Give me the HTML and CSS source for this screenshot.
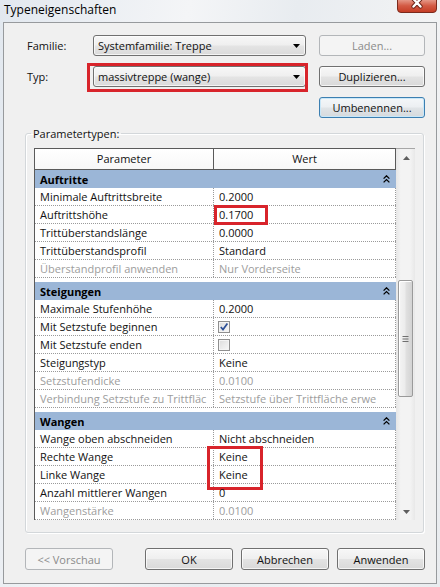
FILE: index.html
```html
<!DOCTYPE html>
<html lang="de">
<head>
<meta charset="utf-8">
<title>Typeneigenschaften</title>
<link rel="stylesheet" href="styles.css">
</head>
<body>
<div class="window">
  <div class="titlebar">
    <span class="title">Typeneigenschaften</span>
    <svg class="close" width="40" height="13" viewBox="0 0 40 13">
      <defs>
        <linearGradient id="cg" x1="0" y1="0" x2="0" y2="1">
          <stop offset="0" stop-color="#e8a192"/>
          <stop offset="0.5" stop-color="#d35a44"/>
          <stop offset="1" stop-color="#c43b24"/>
        </linearGradient>
      </defs>
      <path d="M0.5 -1 V9 a3.5 3.5 0 0 0 3.5 3.5 H36 a3.5 3.5 0 0 0 3.5 -3.5 V-1 Z" fill="url(#cg)" stroke="#7b2a1d"/>
      <path d="M16.5 -1 L23.5 6.5 M23.5 -1 L16.5 6.5" stroke="#6b2216" stroke-width="4.2" stroke-linecap="round"/>
      <path d="M16.5 -1 L23.5 6.5 M23.5 -1 L16.5 6.5" stroke="#ffffff" stroke-width="2.4" stroke-linecap="round"/>
    </svg>
  </div>

  <div class="panel">
    <div class="form">
      <span class="lbl">Familie:</span>
      <div class="combo">
        <span class="combo-text">Systemfamilie: Treppe</span>
        <svg class="caret" width="7" height="4" viewBox="0 0 7 4"><path d="M0 0H7L3.5 4Z" fill="#000"/></svg>
      </div>
      <button class="btn disabled" type="button">Laden...</button>

      <span class="lbl">Typ:</span>
      <div class="combo">
        <span class="combo-text">massivtreppe (wange)</span>
        <svg class="caret" width="7" height="4" viewBox="0 0 7 4"><path d="M0 0H7L3.5 4Z" fill="#000"/></svg>
        <span class="mark mark-typ"></span>
      </div>
      <button class="btn" type="button">Duplizieren...</button>

      <button class="btn focus col3" type="button">Umbenennen...</button>
    </div>

    <fieldset class="group">
      <legend>Parametertypen:</legend>
      <div class="grid">
        <div class="table">
          <div class="thead">
            <div class="th th-p">Parameter</div>
            <div class="th th-w">Wert</div>
          </div>

          <div class="band"><span>Auftritte</span><svg class="chev" width="7" height="8" viewBox="0 0 7 8"><path d="M0.6 3.6 L3.5 0.8 L6.4 3.6 M0.6 7.4 L3.5 4.6 L6.4 7.4" fill="none" stroke="#000" stroke-width="1.3"/></svg></div>
          <div class="row"><div class="c1">Minimale Auftrittsbreite</div><div class="c2"><span class="txt">0.2000</span></div></div>
          <div class="row"><div class="c1">Auftrittshöhe</div><div class="c2"><span class="txt">0.1700</span><span class="mark mark-hoehe"></span></div></div>
          <div class="row"><div class="c1">Trittüberstandslänge</div><div class="c2"><span class="txt">0.0000</span></div></div>
          <div class="row"><div class="c1">Trittüberstandsprofil</div><div class="c2"><span class="txt">Standard</span></div></div>
          <div class="row dim"><div class="c1">Überstandprofil anwenden</div><div class="c2"><span class="txt">Nur Vorderseite</span></div></div>

          <div class="band gap"><span>Steigungen</span><svg class="chev" width="7" height="8" viewBox="0 0 7 8"><path d="M0.6 3.6 L3.5 0.8 L6.4 3.6 M0.6 7.4 L3.5 4.6 L6.4 7.4" fill="none" stroke="#000" stroke-width="1.3"/></svg></div>
          <div class="row"><div class="c1">Maximale Stufenhöhe</div><div class="c2"><span class="txt">0.2000</span></div></div>
          <div class="row"><div class="c1">Mit Setzstufe beginnen</div><div class="c2 cb"><span class="chk"><svg width="10" height="10" viewBox="0 0 10 10"><path d="M1.8 5 L4 7.6 L8.4 1.6" fill="none" stroke="#2c4f96" stroke-width="1.7"/></svg></span></div></div>
          <div class="row"><div class="c1">Mit Setzstufe enden</div><div class="c2 cb"><span class="chk"></span></div></div>
          <div class="row"><div class="c1">Steigungstyp</div><div class="c2"><span class="txt">Keine</span></div></div>
          <div class="row dim"><div class="c1">Setzstufendicke</div><div class="c2"><span class="txt">0.0100</span></div></div>
          <div class="row dim"><div class="c1">Verbindung Setzstufe zu Trittfläc</div><div class="c2"><span class="txt">Setzstufe über Trittfläche erwe</span></div></div>

          <div class="band gap"><span>Wangen</span><svg class="chev" width="7" height="8" viewBox="0 0 7 8"><path d="M0.6 3.6 L3.5 0.8 L6.4 3.6 M0.6 7.4 L3.5 4.6 L6.4 7.4" fill="none" stroke="#000" stroke-width="1.3"/></svg></div>
          <div class="row"><div class="c1">Wange oben abschneiden</div><div class="c2"><span class="txt">Nicht abschneiden</span></div></div>
          <div class="row"><div class="c1">Rechte Wange</div><div class="c2"><span class="txt">Keine</span><span class="mark mark-wangen"></span></div></div>
          <div class="row"><div class="c1">Linke Wange</div><div class="c2"><span class="txt">Keine</span></div></div>
          <div class="row"><div class="c1">Anzahl mittlerer Wangen</div><div class="c2"><span class="txt">0</span></div></div>
          <div class="row dim"><div class="c1">Wangenstärke</div><div class="c2"><span class="txt">0.0100</span></div></div>
        </div>

        <div class="scroll">
          <div class="sb-btn"><svg width="7" height="4" viewBox="0 0 7 4"><path d="M0 4H7L3.5 0Z" fill="#5f5f5f"/></svg></div>
          <div class="thumb">
            <svg width="7" height="8" viewBox="0 0 7 8"><path d="M0.5 1.5H6.5M0.5 4H6.5M0.5 6.5H6.5" stroke="#6f6f6f" stroke-width="1"/></svg>
          </div>
          <div class="sb-space"></div>
          <div class="sb-btn"><svg width="7" height="4" viewBox="0 0 7 4"><path d="M0 0H7L3.5 4Z" fill="#5f5f5f"/></svg></div>
        </div>
      </div>
    </fieldset>

    <div class="actions">
      <button class="btn disabled" type="button">&lt;&lt; Vorschau</button>
      <span class="spacer"></span>
      <button class="btn" type="button">OK</button>
      <button class="btn" type="button">Abbrechen</button>
      <button class="btn" type="button">Anwenden</button>
    </div>
  </div>
</div>
</body>
</html>
```

FILE: styles.css
```css
* { box-sizing: border-box; }
html, body { margin: 0; padding: 0; }
body {
  width: 440px;
  height: 587px;
  overflow: hidden;
  font-family: "Open Sans", "Noto Sans", sans-serif;
  font-size: 11px;
  color: #111;
}

.window {
  width: 440px;
  height: 587px;
  display: flex;
  flex-direction: column;
  padding: 0 3px 3px 3px;
  background: linear-gradient(100deg, #e2e8ef 0%, #f4f5f7 35%, #e8ecf0 55%, #f2f3f4 80%, #e9ecef 100%);
}

.titlebar {
  flex: none;
  height: 22px;
  display: flex;
  justify-content: space-between;
  align-items: flex-start;
}
.title {
  font-size: 12px;
  line-height: 20px;
  padding-left: 1px;
  color: #000;
}
.close { display: block; }

.panel {
  flex: 1;
  border: 1px solid #979a9d;
  background: #f0f0f0;
  display: flex;
  flex-direction: column;
}

.form {
  display: grid;
  grid-template-columns: 53px 213px 106px;
  grid-template-rows: 21px 21px 21px;
  column-gap: 13px;
  row-gap: 10px;
  padding: 12px 0 0 23px;
  align-items: center;
}
.lbl { line-height: 15px; }
.col3 { grid-column: 3; }

.combo {
  position: relative;
  height: 21px;
  display: flex;
  align-items: center;
  justify-content: space-between;
  padding: 0 5px 0 4px;
  border: 1px solid #707070;
  border-radius: 3px;
  background: linear-gradient(#f7f7f7 0%, #efefef 48%, #e4e4e4 52%, #dadada 100%);
  box-shadow: inset 0 0 0 1px rgba(255,255,255,0.7);
}
.combo-text { white-space: nowrap; }

.btn {
  font: inherit;
  color: #111;
  height: 21px;
  padding: 0;
  border: 1px solid #707070;
  border-radius: 3px;
  background: linear-gradient(#f7f7f7 0%, #efefef 48%, #e3e3e3 52%, #d9d9d9 100%);
  box-shadow: inset 0 0 0 1px rgba(255,255,255,0.7);
}
.btn.disabled {
  color: #8b8b8b;
  border-color: #b3b6b9;
  background: #f4f4f4;
  box-shadow: none;
}
.btn.focus {
  border-color: #3c7fb1;
  box-shadow: inset 0 0 0 1px #c9e7f8;
  background: linear-gradient(#f4f7f9 0%, #eceff2 48%, #e0e4e7 52%, #d6dadd 100%);
}

.mark {
  position: absolute;
  border: 3px solid #d8242b;
  pointer-events: none;
}
.mark-typ { left: -7px; top: -4px; width: 221px; height: 29px; }
.mark-hoehe { left: 0; top: -1px; width: 54px; height: 20px; }
.mark-wangen { left: -7px; top: -2px; width: 56px; height: 44px; }

.group {
  margin: 8px 0 0 21px;
  width: 399px;
  padding: 7px 7px 12px 8px;
  border: 1px solid #d3d7da;
  border-radius: 3px;
  box-shadow: 1px 1px 0 #ffffff, inset 1px 1px 0 #ffffff;
  min-width: 0;
}
.group legend {
  padding: 0 2px;
  margin-left: -3px;
  line-height: 15px;
}

.grid {
  display: flex;
  width: 381px;
  height: 372px;
}
.table {
  width: 362px;
  height: 372px;
  border-top: 1px solid #5a5a5a;
  border-left: 1px solid #5a5a5a;
  background: #fff;
  display: flex;
  flex-direction: column;
  overflow: visible;
}
.thead {
  display: flex;
  flex: none;
  height: 21px;
  border-bottom: 1px solid #5a5a5a;
  background: linear-gradient(#ffffff, #f7f7f7);
}
.th { text-align: center; line-height: 20px; }
.th-p { width: 179px; border-right: 1px solid #5a5a5a; }
.th-w { width: 182px; border-right: 1px solid #5a5a5a; }

.band {
  flex: none;
  height: 18px;
  background: #9bb6d7;
  font-weight: 700;
  display: flex;
  align-items: center;
  justify-content: space-between;
  padding: 0 6px 0 5px;
  color: #000;
}
.band.gap { margin-top: 4px; }
.chev { display: block; }

.row {
  flex: none;
  display: flex;
  height: 18px;
  border-bottom: 1px dotted #9a9a9a;
}
.c1, .c2 {
  line-height: 17px;
  white-space: nowrap;
  padding-left: 5px;
}
.c1 {
  width: 179px;
  overflow: hidden;
  border-right: 1px dotted #9a9a9a;
}
.c2 {
  width: 182px;
  position: relative;
  border-right: 1px dotted #9a9a9a;
}
.c2 .txt { display: block; overflow: hidden; }
.c2.cb { display: flex; align-items: center; padding-left: 4px; }
.row.dim { color: #9d9d9d; }

.chk {
  display: flex;
  align-items: center;
  justify-content: center;
  width: 12px;
  height: 12px;
  border: 1px solid #8f8f8f;
  background: linear-gradient(135deg, #dcdcdc, #f8f8f8);
  box-shadow: inset 0 0 0 1px #f4f4f4;
}

.scroll {
  width: 19px;
  height: 372px;
  display: flex;
  flex-direction: column;
  border-top: 1px solid #a7a7a7;
  background: linear-gradient(90deg, #e6e6e6 0%, #f3f3f3 25%, #f3f3f3 75%, #e8e8e8 100%);
}
.sb-btn {
  flex: none;
  height: 17px;
  display: flex;
  align-items: center;
  justify-content: center;
  padding-left: 1px;
}
.thumb {
  flex: none;
  margin: 114px 2px 0 2px;
  height: 117px;
  border: 1px solid #9a9a9a;
  border-radius: 2px;
  background: linear-gradient(90deg, #f4f4f4 0%, #ececec 45%, #e0e0e0 55%, #d3d3d3 100%);
  box-shadow: inset 1px 1px 0 #fff;
  display: flex;
  align-items: center;
  justify-content: center;
}
.sb-space { flex: 1; }

.actions {
  display: flex;
  gap: 8px;
  margin-top: 15px;
  padding: 0 11px 0 21px;
}
.actions .btn { width: 88px; height: 22px; }
.spacer { flex: 1; }
```
